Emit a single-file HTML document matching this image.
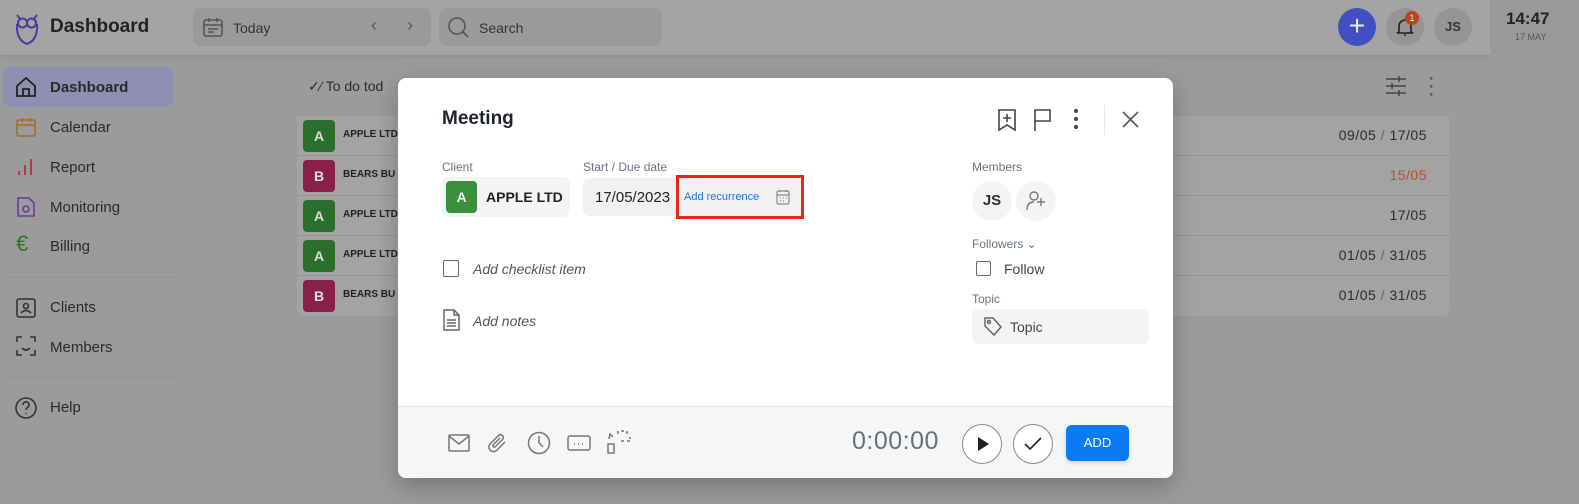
<!DOCTYPE html>
<html><head><meta charset="utf-8"><style>
*{box-sizing:border-box;margin:0;padding:0}
body{width:1579px;height:504px;overflow:hidden;background:#9b9b9b;font-family:"Liberation Sans",sans-serif;position:relative;color:#222}
.a{position:absolute}
.hdr{left:0;top:0;width:1490px;height:55px;background:#a4a4a4;box-shadow:0 2px 4px rgba(0,0,0,.08)}
.clock{left:1490px;top:0;width:89px;height:55px;background:#999}
.pill{background:#9a9a9a;border-radius:8px}
.nav{left:18px;font-size:15px;color:#2a2a2a}
.nav span{position:absolute;left:32px;top:0}
.row{left:297px;width:1152px;height:40px;background:#a3a3a3;border-bottom:1px solid #959595}
.av{width:32px;height:32px;border-radius:4px;color:#ddd;font-weight:bold;font-size:14px;text-align:center;line-height:32px;position:absolute;left:6px;top:4px}
.rt{position:absolute;left:46px;top:13px;font-size:10px;font-weight:bold;color:#222}
.dt{position:absolute;right:22px;top:11px;font-size:14px;color:#2b2b2b;letter-spacing:.5px}
.modal{left:398px;top:78px;width:775px;height:400px;background:#fff;border-radius:8px;box-shadow:0 8px 24px rgba(0,0,0,.25);overflow:hidden}
.lbl{font-size:12px;color:#6b7280}
.foot{left:0;top:328px;width:775px;height:72px;background:#f5f6f8;border-top:1px solid #e3e5e8}
svg{position:absolute}
</style></head><body>
<div class="a hdr"></div>
<div class="a clock"></div>
<svg style="left:14px;top:12px" width="26" height="34" viewBox="0 0 26 34"><path d="M3 3 L7 8 M23 3 L19 8" stroke="#4b3aa0" stroke-width="2"/><circle cx="8.5" cy="11" r="4.5" fill="none" stroke="#4b3aa0" stroke-width="2"/><circle cx="17.5" cy="11" r="4.5" fill="none" stroke="#4b3aa0" stroke-width="2"/><path d="M3 12 Q2 28 13 32 Q24 28 23 12" fill="none" stroke="#4b3aa0" stroke-width="2"/></svg>
<div class="a" style="left:50px;top:16px;font-size:19px;font-weight:bold;color:#222">Dashboard</div>
<div class="a pill" style="left:193px;top:8px;width:238px;height:38px"></div>
<svg style="left:202px;top:16px" width="22" height="22" viewBox="0 0 22 22" fill="none" stroke="#555" stroke-width="1.6"><rect x="2" y="4" width="18" height="16" rx="2"/><path d="M2 9h18M7 2v4M15 2v4M6 13h10M6 16h6"/></svg>
<div class="a" style="left:233px;top:20px;font-size:14px;color:#333">Today</div>
<div class="a" style="left:371px;top:15px;font-size:18px;color:#555">‹</div>
<div class="a" style="left:407px;top:15px;font-size:18px;color:#555">›</div>
<div class="a pill" style="left:439px;top:8px;width:223px;height:38px"></div>
<svg style="left:447px;top:16px" width="22" height="22" viewBox="0 0 22 22" fill="none" stroke="#555" stroke-width="1.6"><circle cx="10" cy="10" r="8"/><path d="M16 16l5 5"/></svg>
<div class="a" style="left:479px;top:20px;font-size:14px;color:#333">Search</div>
<div class="a" style="left:1338px;top:8px;width:38px;height:38px;border-radius:50%;background:#4150c0;color:#eee;font-size:28px;text-align:center;line-height:36px">+</div>
<div class="a" style="left:1386px;top:8px;width:38px;height:38px;border-radius:50%;background:#959595"></div>
<svg style="left:1394px;top:16px" width="22" height="22" viewBox="0 0 22 22" fill="none" stroke="#222" stroke-width="1.6"><path d="M5 16V10a6 6 0 0112 0v6l2 1H3z M10 19h2"/></svg>
<div class="a" style="left:1405px;top:11px;width:14px;height:14px;border-radius:50%;background:#b9461d;color:#eee;font-size:9px;text-align:center;line-height:14px">1</div>
<div class="a" style="left:1434px;top:8px;width:38px;height:38px;border-radius:50%;background:#959595;font-size:13px;font-weight:bold;text-align:center;line-height:38px;color:#333">JS</div>
<div class="a" style="left:1506px;top:9px;font-size:17px;font-weight:bold;color:#222">14:47</div>
<div class="a" style="left:1515px;top:32px;font-size:9px;color:#555">17 MAY</div>

<div class="a" style="left:3px;top:67px;width:170px;height:40px;border-radius:8px;background:#8f8fb3"></div>
<svg style="left:15px;top:76px" width="22" height="22" viewBox="0 0 22 22" fill="none" stroke="#222" stroke-width="1.8"><path d="M2 10L11 2l9 8v10H2z M8 20v-7h6v7"/></svg>
<div class="a nav" style="top:79px;font-weight:bold"><span>Dashboard</span></div>
<svg style="left:16px;top:117px" width="20" height="20" viewBox="0 0 20 20" fill="none" stroke="#a66a25" stroke-width="1.6"><rect x="1" y="3" width="18" height="16" rx="2"/><path d="M1 8h18M6 1v4M14 1v4"/></svg>
<div class="a nav" style="top:119px"><span>Calendar</span></div>
<svg style="left:16px;top:156px" width="20" height="20" viewBox="0 0 20 20" stroke="#b03a4a" stroke-width="2"><path d="M3 19v-4M9 19V9M15 19V3"/></svg>
<div class="a nav" style="top:159px"><span>Report</span></div>
<svg style="left:16px;top:196px" width="20" height="22" viewBox="0 0 20 22" fill="none" stroke="#6a3aa0" stroke-width="1.6"><path d="M2 2h11l5 5v13H2z"/><circle cx="10" cy="13" r="3"/></svg>
<div class="a nav" style="top:199px"><span>Monitoring</span></div>
<div class="a" style="left:16px;top:231px;font-size:22px;color:#2a7a20">€</div>
<div class="a nav" style="top:238px"><span>Billing</span></div>
<div class="a" style="left:8px;top:277px;width:167px;height:1px;background:#929292"></div>
<svg style="left:16px;top:296px" width="20" height="22" viewBox="0 0 20 22" fill="none" stroke="#333" stroke-width="1.6"><rect x="1" y="3" width="18" height="18" rx="2"/><circle cx="10" cy="10" r="2.5"/><path d="M5 17q5-5 10 0"/></svg>
<div class="a nav" style="top:299px"><span>Clients</span></div>
<svg style="left:16px;top:336px" width="20" height="20" viewBox="0 0 20 20" fill="none" stroke="#333" stroke-width="1.6"><path d="M1 6V1h5M14 1h5v5M19 14v5h-5M6 19H1v-5M6 12q4 4 8 0"/></svg>
<div class="a nav" style="top:339px"><span>Members</span></div>
<div class="a" style="left:8px;top:377px;width:167px;height:1px;background:#929292"></div>
<svg style="left:14px;top:396px" width="24" height="24" viewBox="0 0 24 24" fill="none" stroke="#333" stroke-width="1.6"><circle cx="12" cy="12" r="10"/><path d="M9 9a3 3 0 115 2c-1 1-2 1.5-2 3M12 17v1"/></svg>
<div class="a nav" style="top:399px"><span>Help</span></div>

<div class="a" style="left:308px;top:78px;font-size:14px;color:#2b2b2b">✓⁄ To do tod</div>
<svg style="left:1385px;top:75px" width="22" height="22" viewBox="0 0 22 22" stroke="#444" stroke-width="1.5"><path d="M1 4h20M1 11h20M1 18h20M14 1v6M7 8v6M14 15v6"/></svg>
<div class="a" style="left:1428px;top:74px;font-size:20px;color:#444;line-height:8px">·<br>·<br>·</div>
<div class="a row" style="top:116px"><div class="av" style="background:#2c6e2c">A</div><div class="rt">APPLE LTD</div><div class="dt">09/05 <span style="color:#666">/</span> 17/05</div></div>
<div class="a row" style="top:156px"><div class="av" style="background:#8a1f48">B</div><div class="rt">BEARS BU</div><div class="dt" style="color:#b8502e">15/05</div></div>
<div class="a row" style="top:196px"><div class="av" style="background:#2c6e2c">A</div><div class="rt">APPLE LTD</div><div class="dt">17/05</div></div>
<div class="a row" style="top:236px"><div class="av" style="background:#2c6e2c">A</div><div class="rt">APPLE LTD</div><div class="dt">01/05 <span style="color:#666">/</span> 31/05</div></div>
<div class="a row" style="top:276px;border:none;border-radius:0 0 6px 6px"><div class="av" style="background:#8a1f48">B</div><div class="rt">BEARS BU</div><div class="dt">01/05 <span style="color:#666">/</span> 31/05</div></div>

<div class="a modal">
 <div class="a" style="left:44px;top:30px;font-size:19px;font-weight:bold;color:#1f2230">Meeting</div>
 <svg style="left:598px;top:30px" width="22" height="24" viewBox="0 0 22 24" fill="none" stroke="#444" stroke-width="1.6"><path d="M3 2h16v20l-8-5-8 5z M11 6v8M7 10h8"/></svg>
 <svg style="left:634px;top:30px" width="22" height="24" viewBox="0 0 22 24" fill="none" stroke="#444" stroke-width="1.6"><path d="M3 23V2h15v11H3"/></svg>
 <div class="a" style="left:676px;top:31px;width:4px;height:20px;background:radial-gradient(circle at 2px 2px,#444 2px,transparent 2.2px) 0 0/4px 8px"></div>
 <div class="a" style="left:706px;top:27px;width:1px;height:30px;background:#e5e7eb"></div>
 <svg style="left:724px;top:33px" width="17" height="17" viewBox="0 0 17 17" stroke="#555" stroke-width="1.6"><path d="M1 1l15 15M16 1L1 16"/></svg>

 <div class="a lbl" style="left:44px;top:82px">Client</div>
 <div class="a" style="left:44px;top:99px;width:128px;height:40px;background:#f3f4f6;border-radius:6px"></div>
 <div class="a" style="left:48px;top:103px;width:31px;height:32px;background:#3a8f3a;border-radius:4px;color:#fff;font-weight:bold;font-size:14px;text-align:center;line-height:32px">A</div>
 <div class="a" style="left:88px;top:111px;font-size:14px;font-weight:bold;color:#222">APPLE LTD</div>
 <div class="a lbl" style="left:185px;top:82px">Start / Due date</div>
 <div class="a" style="left:185px;top:100px;width:220px;height:38px;background:#f0f1f3;border-radius:6px"></div>
 <div class="a" style="left:197px;top:111px;font-size:15px;color:#222">17/05/2023</div>
 <div class="a" style="left:278px;top:97px;width:128px;height:44px;border:3px solid #e6281b"></div>
 <div class="a" style="left:286px;top:113px;font-size:11px;color:#1a74e0">Add recurrence</div>
 <svg style="left:378px;top:111px" width="14" height="16" viewBox="0 0 14 16" fill="none" stroke="#888" stroke-width="1.2"><rect x="1" y="2" width="12" height="13" rx="1.5"/><path d="M1 6h12M4 1v2M10 1v2M4 9h1M7 9h1M10 9h1M4 12h1M7 12h1"/></svg>

 <div class="a" style="left:45px;top:182px;width:16px;height:17px;border:1.5px solid #666;border-radius:2px"></div>
 <div class="a" style="left:75px;top:183px;font-size:14px;font-style:italic;color:#555">Add checklist item</div>
 <svg style="left:45px;top:231px" width="17" height="22" viewBox="0 0 17 22" fill="none" stroke="#666" stroke-width="1.5"><path d="M1 1h10l5 5v15H1z M11 1v5h5M4 11h9M4 14h9M4 17h9"/></svg>
 <div class="a" style="left:75px;top:235px;font-size:14px;font-style:italic;color:#555">Add notes</div>

 <div class="a lbl" style="left:574px;top:82px">Members</div>
 <div class="a" style="left:574px;top:103px;width:40px;height:40px;border-radius:50%;background:#f3f4f6;font-size:15px;font-weight:bold;color:#333;text-align:center;line-height:40px">JS</div>
 <div class="a" style="left:618px;top:103px;width:40px;height:40px;border-radius:50%;background:#f3f4f6"></div>
 <svg style="left:627px;top:112px" width="22" height="22" viewBox="0 0 22 22" fill="none" stroke="#777" stroke-width="1.4"><circle cx="9" cy="6" r="4"/><path d="M2 20q0-8 7-8M16 8v8M12 12h8"/></svg>
 <div class="a lbl" style="left:574px;top:159px">Followers ⌄</div>
 <div class="a" style="left:578px;top:183px;width:15px;height:15px;border:1.5px solid #666;border-radius:2px"></div>
 <div class="a" style="left:606px;top:183px;font-size:14px;color:#444">Follow</div>
 <div class="a lbl" style="left:574px;top:214px">Topic</div>
 <div class="a" style="left:574px;top:231px;width:177px;height:35px;background:#f3f4f6;border-radius:6px"></div>
 <svg style="left:585px;top:238px" width="20" height="22" viewBox="0 0 20 22" fill="none" stroke="#666" stroke-width="1.5"><path d="M2 2h8l8 9-7 8-9-9z"/><circle cx="6" cy="6" r="1.5"/></svg>
 <div class="a" style="left:612px;top:241px;font-size:14px;color:#444">Topic</div>

 <div class="a foot">
  <svg style="left:50px;top:27px" width="22" height="18" viewBox="0 0 22 18" fill="none" stroke="#777" stroke-width="1.5"><rect x="1" y="1" width="20" height="16" rx="1"/><path d="M1 2l10 8 10-8"/></svg>
  <svg style="left:89px;top:24px" width="22" height="24" viewBox="0 0 22 24" fill="none" stroke="#777" stroke-width="1.5"><path d="M18 11l-8 8a4.5 4.5 0 01-7-6l9-9a3 3 0 014 4l-8 8a1.5 1.5 0 01-2-2l7-7"/></svg>
  <svg style="left:129px;top:24px" width="24" height="24" viewBox="0 0 24 24" fill="none" stroke="#777" stroke-width="1.5"><circle cx="12" cy="12" r="10.5"/><path d="M12 5v7l4 4"/></svg>
  <svg style="left:169px;top:27px" width="24" height="18" viewBox="0 0 24 18" fill="none" stroke="#777" stroke-width="1.5"><rect x="1" y="2" width="22" height="14" rx="2"/><path d="M7 10h1M11 10h1M15 10h1"/></svg>
  <svg style="left:209px;top:22px" width="24" height="26" viewBox="0 0 24 26" fill="none" stroke="#777" stroke-width="1.5"><path d="M14 2h3M20 2v3M23 8v2M14 12h3M20 12h3M11 2v3M6 8L3 5l-1 5M1 15h6v9H1z"/></svg>
  <div class="a" style="left:454px;top:20px;font-size:25px;color:#6b6f78;letter-spacing:.5px">0:00:00</div>
  <div class="a" style="left:564px;top:17px;width:40px;height:40px;border-radius:50%;border:1px solid #888;background:#fff"></div>
  <svg style="left:578px;top:29px" width="14" height="16" viewBox="0 0 14 16"><path d="M2 1l11 7-11 7z" fill="#222"/></svg>
  <div class="a" style="left:615px;top:17px;width:40px;height:40px;border-radius:50%;border:1px solid #888;background:#fff"></div>
  <svg style="left:626px;top:30px" width="18" height="14" viewBox="0 0 18 14" fill="none" stroke="#222" stroke-width="1.6"><path d="M1 7l5 5L17 1"/></svg>
  <div class="a" style="left:668px;top:18px;width:63px;height:36px;border-radius:6px;background:#0a7bf5;color:#fff;font-size:13px;text-align:center;line-height:36px;box-shadow:0 2px 4px rgba(0,0,0,.15)">ADD</div>
 </div>
</div>
</body></html>
